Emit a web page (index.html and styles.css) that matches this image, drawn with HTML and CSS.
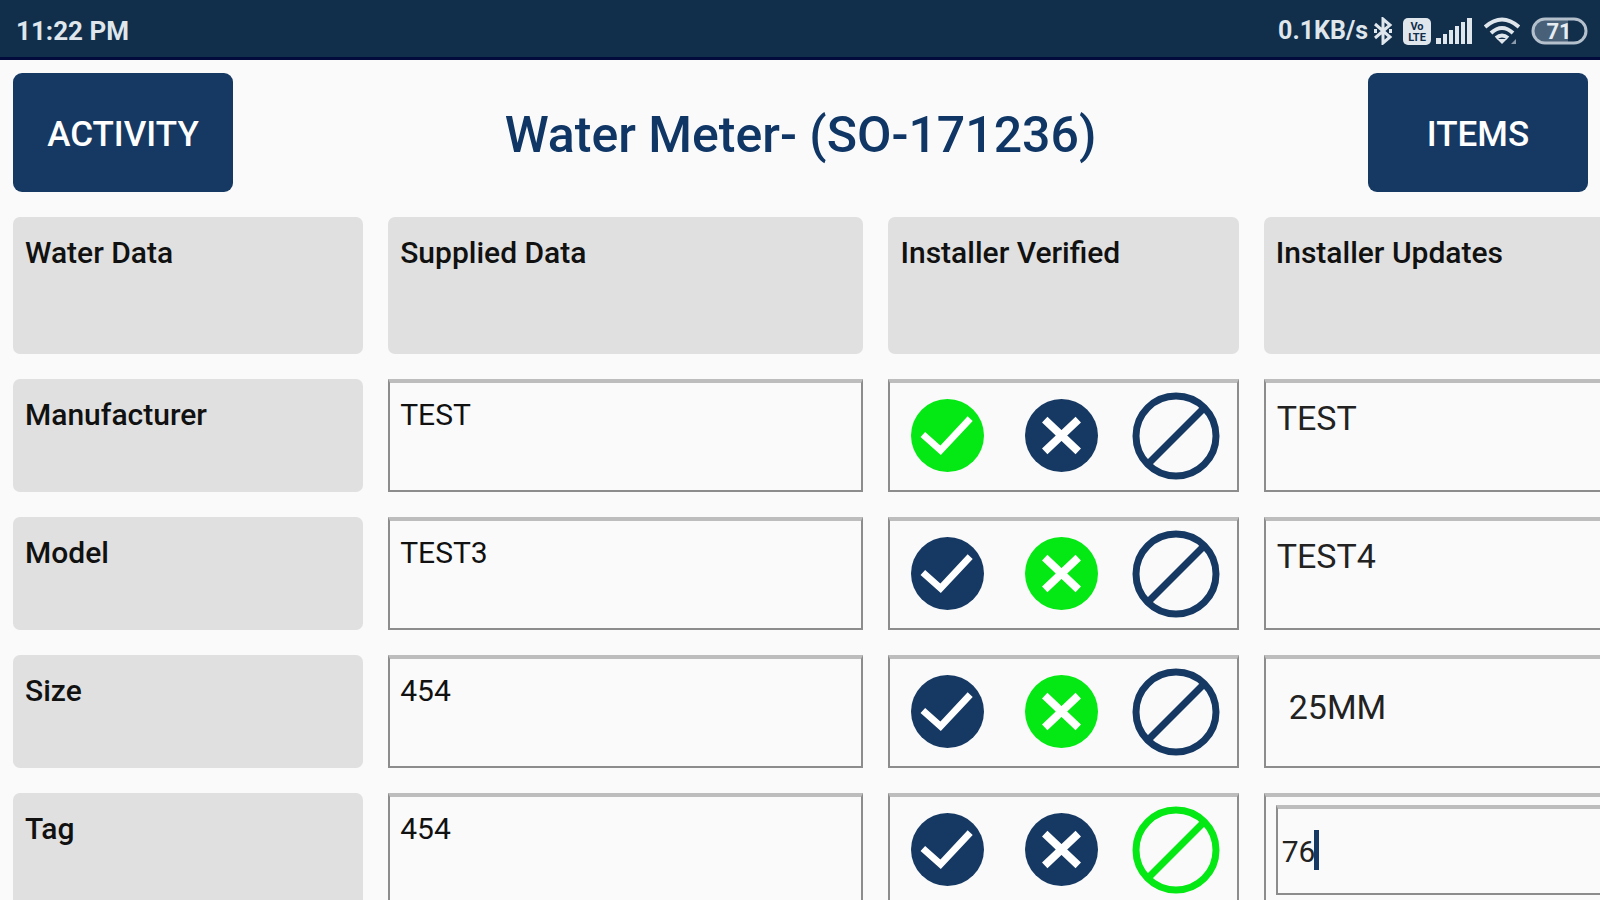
FILE: index.html
```html
<!DOCTYPE html>
<html lang="en">
<head>
  <meta charset="UTF-8">
  <title>Water Meter</title>
  <link rel="stylesheet" href="styles.css">
</head>
<body>

  <!-- icon shapes shared by all rows -->
  <svg class="sprites" aria-hidden="true">
    <symbol id="check" viewBox="0 0 74 74">
      <circle cx="37" cy="37" r="37" fill="currentColor"/>
      <path d="M12 36 L30 52 L60 20" fill="none" stroke="#fff" stroke-width="7"/>
    </symbol>
    <symbol id="cross" viewBox="0 0 74 74">
      <circle cx="37" cy="37" r="37" fill="currentColor"/>
      <path d="M20 21 L54 53 M54 21 L20 53" fill="none" stroke="#fff" stroke-width="8"/>
    </symbol>
    <symbol id="ban" viewBox="0 0 88 88">
      <circle cx="44" cy="44" r="40" fill="none" stroke="currentColor" stroke-width="7"/>
      <path d="M17 71 L71 17" fill="none" stroke="currentColor" stroke-width="7"/>
    </symbol>
  </svg>

  <div class="status">
    <span>11:22 PM</span>
    <div class="status-icons">
      <span>0.1KB/s</span>
      <svg class="bluetooth" width="20" height="28" viewBox="0 0 20 28" fill="none" stroke="currentColor" stroke-width="3">
        <path d="M2 7 L17 20 L10 26 V2 L17 8 L2 21"/>
        <path d="M1 14 h3 M16 14 h3" stroke-width="4"/>
      </svg>
      <svg class="volte" width="28" height="27" viewBox="0 0 28 27">
        <rect width="28" height="27" rx="5" fill="currentColor"/>
        <text x="14" y="12" text-anchor="middle">Vo</text>
        <text x="14" y="23" text-anchor="middle">LTE</text>
      </svg>
      <svg class="signal" width="36" height="26" viewBox="0 0 36 26" fill="currentColor">
        <rect x="0" y="20" width="5" height="6"/>
        <rect x="7" y="16" width="4" height="10"/>
        <rect x="13" y="12" width="4" height="14"/>
        <rect x="19" y="8" width="4" height="18"/>
        <rect x="25" y="4" width="4" height="22"/>
        <rect x="31" y="0" width="5" height="26"/>
      </svg>
      <svg class="wifi" width="36" height="28" viewBox="0 0 36 28" fill="none" stroke="currentColor" stroke-width="4">
        <path d="M1 10 Q18 -5 35 10"/>
        <path d="M7 16 Q18 6 29 16"/>
        <path d="M12 21 Q18 16 24 21"/>
        <path d="M13 22 L18 27 L23 22 Z" fill="currentColor" stroke="none"/>
        <path d="M27 27 L32 22 V27 Z" fill="currentColor" stroke="none" opacity=".6"/>
      </svg>
      <svg class="battery" width="57" height="28" viewBox="0 0 57 28">
        <path d="M14 3 H37 V25 H14 A11 11 0 0 1 14 3 Z" fill="#8193a6" opacity=".5"/>
        <rect x="2" y="2" width="53" height="24" rx="12" fill="none" stroke="#b4c0cc" stroke-width="3"/>
        <text x="28" y="22" text-anchor="middle">71</text>
      </svg>
    </div>
  </div>

  <div class="nav">
    <button>ACTIVITY</button>
    <h1>Water Meter- (SO-171236)</h1>
    <button>ITEMS</button>
  </div>

  <div class="container">
    <table>
      <colgroup>
        <col class="narrow">
        <col class="wide">
        <col class="narrow">
        <col class="wide">
      </colgroup>
      <thead>
        <tr>
          <th scope="col">Water Data</th>
          <th scope="col">Supplied Data</th>
          <th scope="col">Installer Verified</th>
          <th scope="col">Installer Updates</th>
        </tr>
      </thead>
      <tbody>
        <tr>
          <th scope="row">Manufacturer</th>
          <td>TEST</td>
          <td class="verify">
            <div class="choices">
              <button class="on" aria-label="Correct"><svg class="dot"><use href="#check"/></svg></button>
              <button aria-label="Wrong"><svg class="dot"><use href="#cross"/></svg></button>
              <button aria-label="Not available"><svg class="ring"><use href="#ban"/></svg></button>
            </div>
          </td>
          <td class="update"><input type="text" aria-label="Manufacturer update" value="TEST"></td>
        </tr>
        <tr>
          <th scope="row">Model</th>
          <td>TEST3</td>
          <td class="verify">
            <div class="choices">
              <button aria-label="Correct"><svg class="dot"><use href="#check"/></svg></button>
              <button class="on" aria-label="Wrong"><svg class="dot"><use href="#cross"/></svg></button>
              <button aria-label="Not available"><svg class="ring"><use href="#ban"/></svg></button>
            </div>
          </td>
          <td class="update"><input type="text" aria-label="Model update" value="TEST4"></td>
        </tr>
        <tr>
          <th scope="row">Size</th>
          <td>454</td>
          <td class="verify">
            <div class="choices">
              <button aria-label="Correct"><svg class="dot"><use href="#check"/></svg></button>
              <button class="on" aria-label="Wrong"><svg class="dot"><use href="#cross"/></svg></button>
              <button aria-label="Not available"><svg class="ring"><use href="#ban"/></svg></button>
            </div>
          </td>
          <td class="update">
            <select aria-label="Size update">
              <option>25MM</option>
            </select>
          </td>
        </tr>
        <tr>
          <th scope="row">Tag</th>
          <td>454</td>
          <td class="verify">
            <div class="choices">
              <button aria-label="Correct"><svg class="dot"><use href="#check"/></svg></button>
              <button aria-label="Wrong"><svg class="dot"><use href="#cross"/></svg></button>
              <button class="on" aria-label="Not available"><svg class="ring"><use href="#ban"/></svg></button>
            </div>
          </td>
          <td class="update">
            <div class="field">
              <input type="text" aria-label="Tag update" value="76">
              <span class="caret"></span>
            </div>
          </td>
        </tr>
      </tbody>
    </table>
  </div>

</body>
</html>
```
FILE: styles.css
```css
:root {
  --bg: #fafafa;
  --bar: #112e4b;
  --navy: #163963;
  --title: #0f3665;
  --green: #04e813;
  --head: #e0e0e0;
  --line: #8c8c8c;
  --line-top: #bdbdbd;
}
* {
  box-sizing: border-box;
}
body {
  margin: 0;
  height: 100vh;
  overflow: hidden;
  font-family: Roboto, sans-serif;
  font-size: 30px;
  line-height: 36px;
  background: var(--bg);
  color: #111;
}
button, input, select {
  font-family: inherit;
  margin: 0;
}
button {
  border: none;
  cursor: pointer;
}
.sprites {
  display: none;
}

.status {
  display: flex; justify-content: space-between; align-items: center;
  height: 60px;
  padding: 5px 12px 0 16px;
  background: var(--bar);
  border-bottom: 3px solid #020b3c;
  color: #dfe6ec;
  font-size: 26px;
  font-weight: 700;
}
.status-icons {
  display: flex; align-items: center;
  font-size: 25px;
}
.bluetooth { margin-left: 5px; }
.volte { margin-left: 10px; }
.signal { margin-left: 5px; }
.wifi { margin-left: 12px; }
.battery { margin-left: 11px; }
.volte text {
  font-size: 11px;
  fill: var(--bar);
}
.battery text {
  font-size: 22px;
  fill: #e6ecf1;
}

.nav {
  display: flex; justify-content: space-between; align-items: center;
  padding: 13px 12px 0 13px;
}
.nav button {
  width: 220px; height: 119px;
  padding: 4px 0 0;
  background: var(--navy);
  color: #fff;
  border-radius: 9px;
  font-size: 35px;
  font-weight: 500;
}
.nav h1 {
  margin: 0;
  padding-top: 4px;
  color: var(--title);
  font-size: 50px;
  line-height: 60px;
  font-weight: 500;
}

/* the last column runs off the right side, the table scrolls */
.container {
  overflow-x: auto;
  scrollbar-width: none;
}
table {
  width: 111%;
  margin-left: -12px;
  table-layout: fixed;
  border-collapse: separate;
  border-spacing: 25px;
}
.narrow { width: 350px; }
.wide { width: 475px; }
th, td {
  height: 113px;
  padding: 18px 12px;
  text-align: left;
  vertical-align: top;
}
th {
  background: var(--head);
  border-radius: 7px;
  font-weight: 500;
}
thead th {
  height: 137px;
}
td {
  padding: 14px 10px;
  border: 2px solid var(--line);
  border-top: 4px solid var(--line-top);
}

.verify {
  padding: 0 4px 2px 0;
  vertical-align: middle;
}
.choices {
  display: flex;
}
.choices button {
  flex: 1;
  display: flex; justify-content: center; align-items: center;
  padding: 0;
  background: none;
  color: var(--navy);
}
.choices .on {
  color: var(--green);
}
.dot { width: 73px; height: 73px; }
.ring { width: 88px; height: 88px; }

.update {
  padding: 0;
}
.update input, .update select {
  display: block;
  width: 100%;
  height: 70px;
  padding: 0 11px;
  border: none;
  outline: none;
  background: none;
  color: #222;
  font-size: 34px;
}
.update select {
  height: 96px;
  padding: 0 23px;
  appearance: none;
}
.field {
  position: relative;
  margin: 8px 10px;
  border: 2px solid var(--line);
  border-top: 4px solid var(--line-top);
}
.update .field input {
  height: 84px;
  padding: 0 4px;
  font-size: 30px;
}
.caret {
  position: absolute;
  left: 36px; top: 21px;
  width: 5px; height: 40px;
  background: var(--navy);
}
```
